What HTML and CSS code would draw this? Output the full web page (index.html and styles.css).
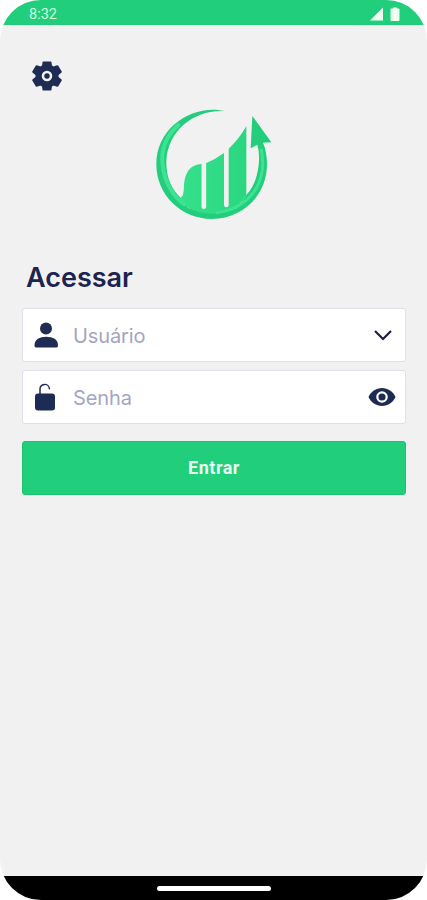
FILE: index.html
```html
<!DOCTYPE html>
<html lang="pt-BR">
<head>
<meta charset="utf-8">
<title>Acessar</title>
<link rel="stylesheet" href="styles.css">
</head>
<body>
<div class="phone">
  <header class="status">
    <span class="clock">8:32</span>
    <svg class="status-icons" width="30" height="14" viewBox="0 0 30 14">
      <path d="M0 13.500 13 .5v13z"/>
      <path d="M23 .5h4v1h1.500q1 0 1 1V13q0 1-1 1h-7q-1 0-1-1V2.500q0-1 1-1H23z"/>
    </svg>
  </header>
  <main class="content">
    <svg class="gear" width="30" height="30" viewBox="0 0 30 30">
      <path class="ink" stroke="#1e2c54" stroke-width="1.500" stroke-linejoin="round" d="M11.300 1.200h7.400l.6 3.800 2.200 1.300 4-1.400 3.600 6-3.300 2.700v2.800l3.300 2.700-3.600 6-4-1.400-2.200 1.300-.6 3.800h-7.400l-.6-3.800-2.200-1.300-4 1.400-3.600-6 3.300-2.700v-2.800l-3.300-2.700 3.600-6 4 1.400 2.200-1.300z"/>
      <circle cx="15" cy="15" r="4" fill="none" stroke="#f1f1f1" stroke-width="2.600"/>
    </svg>
    <svg class="logo" width="140" height="135" viewBox="0 0 420 405">
      <defs>
        <linearGradient id="bars" x1="0" y1="0" x2="1" y2="0">
          <stop offset="0" stop-color="#35e18b"/>
          <stop offset="1" stop-color="#2bd680"/>
        </linearGradient>
      </defs>
      <path fill="#22cd7b" d="M243 49C150 25 34 92 34 208C34 300 108 372 201 372C294 372 366 300 366 208Q366 172 354 143L379 142L322 63L317 160L337 149Q345 176 341 210C336 250 325 278 304 300L275 340H130L107 308C80 284 63 246 64 200C67 105 152 41 243 49Z"/>
      <path fill="url(#bars)" d="M107 308Q117 305 117 268Q122 210 169 207L184 204Q211 193 237 174L251 161Q284 130 304 93V300L275 338Q240 356 201 356Q160 356 125 336Z"/>
      <path fill="none" stroke="#3ce391" stroke-width="12" stroke-linecap="round" d="M100 90C55 130 46 180 55 224C62 265 85 305 118 328"/>
      <path fill="none" stroke="#3ce391" stroke-width="9" stroke-linecap="round" d="M215 353C285 345 342 300 352 224Q355 193 349 165"/>
      <path fill="none" stroke="#f1f1f1" stroke-width="14" stroke-linecap="round" d="M176.500 190V335M244 155V330"/>
    </svg>
    <h1 class="title">Acessar</h1>
    <form class="form">
      <div class="field">
        <svg class="lead" width="24" height="26" viewBox="0 0 24 26">
          <circle class="ink" cx="11" cy="6.500" r="6"/>
          <path class="ink" d="M-.5 23.500C-.5 17.500 4.500 14.800 11.200 14.800s11.800 2.700 11.800 8.700q0 2-1.600 2H1.100q-1.600 0-1.600-2z"/>
        </svg>
        <span class="hint">Usuário</span>
        <svg class="chevron" width="18" height="11" viewBox="0 0 18 11">
          <path d="m1 1 8 8 8-8"/>
        </svg>
      </div>
      <div class="field">
        <svg class="lead lock" width="20" height="28" viewBox="0 0 20 28">
          <rect class="ink" x="0" y="10.500" width="20" height="17" rx="3"/>
          <path class="shackle" d="M5 11V6.500a4.700 4.700 0 0 1 9.400-.8"/>
        </svg>
        <span class="hint">Senha</span>
        <svg class="eye" width="28" height="20" viewBox="0 0 28 20">
          <path class="ink" d="M.5 10C3 4.500 8 1 14 1s11 3.500 13.500 9C25 15.500 20 19 14 19S3 15.500.5 10z"/>
          <circle cx="14" cy="10" r="4.700" fill="none" stroke="#fff" stroke-width="2.200"/>
        </svg>
      </div>
      <button class="submit" type="button">Entrar</button>
    </form>
  </main>
  <footer class="navbar"><span class="handle"></span></footer>
</div>
</body>
</html>
```

FILE: styles.css
```css
* { box-sizing: border-box; }
body { margin: 0; background: #fff; font-family: Inter, "Liberation Sans", sans-serif; }
svg { display: block; flex: none; overflow: visible; }
.ink { fill: #1e2c54; }
.phone {
  display: flex;
  flex-direction: column;
  height: 900px;
  border-radius: 41px;
  overflow: hidden;
  background: #f1f1f1;
}
.status {
  display: flex;
  align-items: center;
  justify-content: space-between;
  height: 25px;
  padding: 3px 27px 0 29px;
  background: #21ce7b;
}
.clock { padding-top: 2px; font: 400 14.500px/20px Roboto, sans-serif; color: #d4ffe4; }
.status-icons { fill: #effff2; }
.content { flex: 1; padding: 36px 21px 0 22px; }
.gear { margin-left: 10px; }
.logo { margin: 4px 0 0 123px; }
.title {
  margin: 30px 0 0 4px;
  font-size: 27px;
  line-height: 36px;
  font-weight: 600;
  letter-spacing: 0;
  color: #1c2450;
}
.form { display: flex; flex-direction: column; gap: 8px; margin-top: 12px; }
.field {
  display: flex;
  align-items: center;
  height: 54px;
  padding: 0 9px 0 12px;
  border: 1px solid #dde0eb;
  border-radius: 3px;
  background: #fff;
}
.lead { margin-right: 14px; }
.lock { margin: 0 18px 0 0; }
.hint { flex: 1; padding-top: 1px; font-size: 20px; line-height: 26px; letter-spacing: -0.1px; color: #a3a5c3; }
.chevron { margin-right: 4px; fill: none; stroke: #1b2142; stroke-width: 2.200; }
.shackle { fill: none; stroke: #1e2c54; stroke-width: 1.500; stroke-linecap: round; }
.submit {
  height: 54px;
  margin-top: 9px;
  padding: 0;
  border: 1px solid #18c56d;
  border-radius: 3px;
  background: #21ce7b;
  font: 700 18px/24px Roboto, sans-serif;
  letter-spacing: 0.5px;
  color: #e8ffef;
}
.navbar {
  display: flex;
  align-items: center;
  justify-content: center;
  height: 24px;
  background: #000;
}
.handle { width: 114px; height: 5px; border-radius: 3px; background: #fff; }
```
